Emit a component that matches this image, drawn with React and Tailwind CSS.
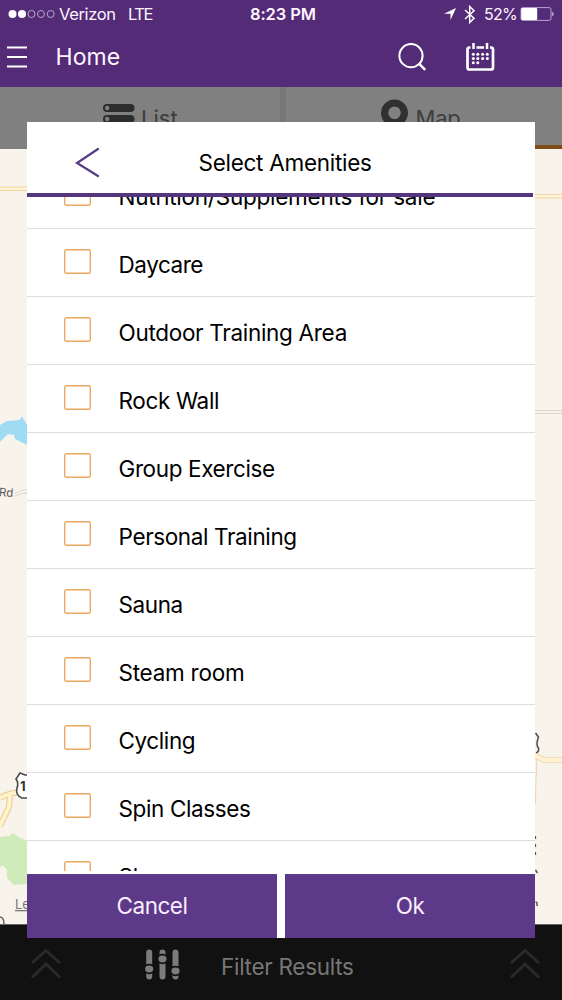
const amenities = [
  { name: 'Nutrition/Supplements for sale', track: 'tracking-[-0.24px]' },
  { name: 'Daycare', track: 'tracking-[-0.45px]' },
  { name: 'Outdoor Training Area', track: 'tracking-[-0.3px]' },
  { name: 'Rock Wall', track: 'tracking-[-0.35px]' },
  { name: 'Group Exercise', track: 'tracking-[-0.38px]' },
  { name: 'Personal Training', track: 'tracking-[-0.37px]' },
  { name: 'Sauna', track: 'tracking-[-0.4px]' },
  { name: 'Steam room', track: 'tracking-[-0.25px]' },
  { name: 'Cycling', track: 'tracking-[-0.4px]' },
  { name: 'Spin Classes', track: 'tracking-[-0.37px]' },
  { name: 'Showers', track: 'tracking-[-0.3px]' },
];

function StatusBar() {
  return (
    <div className="flex h-[28px] items-center text-[17px] leading-none">
      <svg className="ml-[8px] shrink-0" width="48" height="10" viewBox="0 0 48 10">
        <circle cx="4.5" cy="5" r="4" fill="#fff" />
        <circle cx="14" cy="5" r="4" fill="#fff" />
        <g fill="none" stroke="#c3b3d6" strokeWidth="0.9">
          <circle cx="23.5" cy="5" r="3.5" />
          <circle cx="33" cy="5" r="3.5" />
          <circle cx="42.7" cy="5" r="3.5" />
        </g>
      </svg>
      <span className="ml-[3px] w-[69px] shrink-0 whitespace-nowrap text-[16.5px] tracking-[-0.35px]">Verizon</span>
      <span className="w-[122px] shrink-0 text-[16.5px] tracking-[-1.5px]">LTE</span>
      <span className="w-[193px] shrink-0 text-[16.5px] font-semibold tracking-[-0.1px]">8:23 PM</span>
      <svg className="shrink-0" width="14" height="14" viewBox="0 0 14 14">
        <path d="M13 1 7.5 13V6.8H1Z" fill="#fff" />
      </svg>
      <svg className="ml-[7px] shrink-0" width="12" height="19" viewBox="0 0 12 19">
        <path d="M1 5l9 8.3L5.7 17.5V1.5L10 5.7 1 14" fill="none" stroke="#fff" strokeWidth="1.5" />
      </svg>
      <span className="ml-[8px] w-[36px] shrink-0 text-[16px] tracking-[-0.8px]">52%</span>
      <svg className="shrink-0" width="35" height="14" viewBox="0 0 35 14">
        <rect x="1" y="0.6" width="30" height="12.8" rx="1.8" fill="none" stroke="#c3b3d6" strokeWidth="0.9" />
        <rect x="1.2" y="1" width="16" height="12" rx="1" fill="#fff" />
        <path d="M32.5 4.5q2 2.500 0 5Z" fill="#fff" />
      </svg>
    </div>
  );
}

function NavBar() {
  return (
    <div className="flex h-[59px] items-center">
      <svg className="-mt-[2px] ml-[6px] shrink-0" width="22" height="24" viewBox="0 0 22 24">
        <path d="M1 2.500h20M1 12h20M1 21.500h20" stroke="#fff" strokeWidth="1.9" />
      </svg>
      <span className="-mt-[1px] ml-[27.500px] w-[341.500px] text-[23px] tracking-[0.1px]">Home</span>
      <svg className="shrink-0" width="30" height="30" viewBox="0 0 30 30">
        <circle cx="14" cy="12.700" r="11.600" fill="none" stroke="#fff" strokeWidth="2" />
        <path d="M21.700 20.300l6.500 6.500" stroke="#fff" strokeWidth="2.500" />
      </svg>
      <svg className="ml-[38px] shrink-0" width="31" height="30" viewBox="0 0 31 30">
        <path d="M5.500 4.500H4.500A2 2 0 0 0 2.500 6.500V24.500a2 2 0 0 0 2 2H26a2 2 0 0 0 2-2V6.500a2 2 0 0 0-2-2h-1M11.500 4.500h7.500" fill="none" stroke="#fff" strokeWidth="2.700" />
        <path d="M8.500 0v6M22 0v6" stroke="#fff" strokeWidth="2.500" />
        <g fill="#fff">
          {[12.8, 17.6, 22.3].map((x) => <circle key={x} cx={x} cy="11.300" r="1.500" />)}
          {[8.300, 12.8, 17.6, 22.3].map((x) => <circle key={x} cx={x} cy="15.500" r="1.500" />)}
          {[8.300, 12.8].map((x) => <circle key={x} cx={x} cy="19.700" r="1.500" />)}
          <circle cx="8.300" cy="11.300" r="1.500" />
        </g>
      </svg>
    </div>
  );
}

function ViewTabs() {
  return (
    <div className="flex h-[62px] text-[22px] text-[#3d3d3d]">
      <div className="flex w-[280px] bg-[#808080] pl-[103px] pt-[16px]">
        <svg className="shrink-0" width="32" height="30" viewBox="0 0 32 30">
          <g fill="#2d2d2d">
            <rect x="0" y="1" width="31.500" height="8" rx="4" />
            <rect x="0" y="12" width="31.500" height="8" rx="4" />
            <rect x="0" y="22" width="31.500" height="8" rx="4" />
          </g>
          <g fill="#808080"><circle cx="4.200" cy="5" r="2.200" /><circle cx="4.200" cy="16" r="2.200" /></g>
        </svg>
        <span className="-mt-[2px] ml-[6px] leading-[34px]">List</span>
      </div>
      <div className="w-[6px] bg-[#777]" />
      <div className="flex w-[276px] border-b-4 border-[#7e4c14] bg-[#808080] pl-[95px] pt-[12px]">
        <svg className="shrink-0" width="28" height="38" viewBox="0 0 28 38">
          <path fillRule="evenodd" d="M13.500 .5a13.500 13.500 0 0 1 13.500 13.500c0 8-8 14-13.500 24C8 28 0 22 0 14A13.500 13.500 0 0 1 13.500 .5Zm0 7a6.300 6.300 0 1 0 0 12.600 6.300 6.300 0 0 0 0-12.600Z" fill="#303030" />
        </svg>
        <span className="-mt-[2px] ml-[6.500px] tracking-[-0.2px] leading-[42px]">Map</span>
      </div>
    </div>
  );
}

function MapArea() {
  return (
    <svg className="block shrink-0" width="562" height="775" viewBox="0 149 562 775" fontFamily="Inter, sans-serif">
      <rect y="149" width="562" height="775" fill="#f8f3eb" />
      <path d="M0 188.500H28M535 196H562" stroke="#fff5da" strokeWidth="4" />
      <path d="M0 187H28M0 190.500H28M535 194.500H562M535 198H562" stroke="#f1d6a0" strokeWidth="1.100" />
      <path d="M535 410.500H562M535 413.500H562" stroke="#d9d4cc" strokeWidth="1" />
      <path d="M0 425l7-4 12-1 3-3.500 5 8V445l-12-6-1-4-6-1-8 8Z" fill="#9fdcf4" />
      <text x="-1" y="496" fontSize="11.500" fill="#555" transform="rotate(4 0 492)">Rd</text>
      <path d="M15 493.500q6-4 13-4M15 496q6-3 13-3" fill="none" stroke="#d9d4cc" strokeWidth="1" />
      <path d="M0 798q9-5 18-5.500M10 796l-1 11-9 19" fill="none" stroke="#e7cb92" strokeWidth="6" />
      <path d="M0 798q9-5 18-5.500M10 796l-1 11-9 19" fill="none" stroke="#fff3c9" strokeWidth="4" />
      <path d="M20 773l5 2h6v23H22q-7-3-5-10 2-5-1-9Z" fill="#fff" stroke="#4a4a4a" strokeWidth="1.600" />
      <text x="20" y="791" fontSize="13" fontWeight="700" fill="#333">1</text>
      <path d="M0 837l9-1 4-3 7 5 8 3v43l-14 1-7-7 0-8-4-5-3 2Z" fill="#cfebb9" />
      <text x="15" y="909" fontSize="13" fill="#777" textDecoration="underline">Legal</text>
      <path d="M-2 917q6-1 6 7" fill="none" stroke="#666" strokeWidth="1.600" />
      <path d="M535.500 733l3 4q-3 8 0 11 1 3-3 6" fill="none" stroke="#4a4a4a" strokeWidth="1.500" />
      <path d="M534 755l10 5H562" fill="none" stroke="#ecd5a8" strokeWidth="5.500" />
      <path d="M534 755l10 5H562" fill="none" stroke="#fff3cf" strokeWidth="3.800" />
      <path d="M537 759q-1.500 25-1.500 45" fill="none" stroke="#ecd5a8" strokeWidth="1" />
      <path d="M535.500 836v24" stroke="#555" strokeWidth="1.200" strokeDasharray="3 5" />
      <path d="M535.500 870l2 3M535.500 902q2 0 1.500 4" fill="none" stroke="#555" strokeWidth="1.500" />
    </svg>
  );
}

function DoubleChevron() {
  return (
    <svg className="shrink-0" width="32" height="32" viewBox="0 0 32 32">
      <path d="M2 15L16 2.500l14 12.500M2 29.500l14-13.500 14 13.500" fill="none" stroke="#2a2a2a" strokeWidth="3" />
    </svg>
  );
}

function FilterBar() {
  return (
    <div className="flex h-[76px] items-start border-t border-[#666] bg-[#111] pt-[23px]">
      <div className="ml-[30px]"><DoubleChevron /></div>
      <svg className="ml-[82px] mt-[1px] shrink-0" width="36" height="32" viewBox="0 0 36 32">
        <g stroke="#7c7c7c" strokeWidth="6" strokeLinecap="round">
          <path d="M5.200 3.500v24M18.500 3.500v24M31.500 3.500v24" />
        </g>
        <g fill="#7c7c7c" stroke="#111" strokeWidth="1.800">
          <ellipse cx="5.200" cy="20" rx="5" ry="4.300" />
          <ellipse cx="18.500" cy="10" rx="5" ry="4.300" />
          <ellipse cx="31.500" cy="22" rx="5" ry="4.300" />
        </g>
      </svg>
      <span className="ml-[41px] mt-[2px] w-[288px] text-[22.500px] leading-[34px] tracking-[-0.3px] text-[#777]">Filter Results</span>
      <DoubleChevron />
    </div>
  );
}

function AmenitiesDialog() {
  return (
    <div className="absolute left-[27px] top-[122px] flex h-[816px] w-[508px] flex-col bg-white text-black">
      <div className="mr-[2px] flex h-[75px] shrink-0 items-center border-b-4 border-[#563580]">
        <svg className="ml-[48px] mt-[10px] shrink-0" width="26" height="32" viewBox="0 0 26 32">
          <path d="M23 2L2 16l21 13" fill="none" stroke="#563b86" strokeWidth="2.200" strokeLinecap="round" />
        </svg>
        <span className="ml-[97.500px] mt-[11px] text-[22.500px] tracking-[-0.28px]">Select Amenities</span>
      </div>
      <div className="h-[674px] shrink-0 overflow-hidden">
        <ul className="-mt-[36px]">
          {amenities.map((a) => (
            <li key={a.name} className="flex h-[68px] items-start border-b border-[#dedede] pl-[37px]">
              <svg className="mt-[20px] shrink-0" width="27" height="25" viewBox="0 0 27 25">
                <rect x="0.700" y="0.700" width="25.600" height="23.600" rx="1.500" fill="#fff" stroke="#eaa860" strokeWidth="1.400" />
              </svg>
              <span className={`ml-[27.500px] mt-[19px] whitespace-nowrap text-[22.500px] leading-[34px] ${a.track}`}>{a.name}</span>
            </li>
          ))}
        </ul>
      </div>
      <div className="mt-auto grid h-[64px] shrink-0 grid-cols-2 gap-2 text-[22.500px] tracking-[-0.5px] text-[#fbeeff]">
        <button className="bg-[#5d3989]">Cancel</button>
        <button className="bg-[#5d3989]">Ok</button>
      </div>
    </div>
  );
}

export default function App() {
  return (
    <div className="relative flex h-[1000px] w-[562px] flex-col overflow-hidden bg-[#111] font-['Inter',sans-serif]">
      <header className="h-[87px] shrink-0 bg-[#532b77] text-[#fff5ff]">
        <StatusBar />
        <NavBar />
      </header>
      <ViewTabs />
      <MapArea />
      <FilterBar />
      <AmenitiesDialog />
    </div>
  );
}
